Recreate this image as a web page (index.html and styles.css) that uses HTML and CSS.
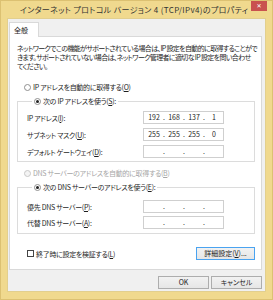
FILE: index.html
```html
<!DOCTYPE html>
<html lang="ja">
<head>
<meta charset="utf-8">
<title>インターネット プロトコル バージョン 4 (TCP/IPv4)のプロパティ</title>
<link rel="stylesheet" href="styles.css">
</head>
<body>
<div class="window">
  <div class="titlebar">
    <span class="title">インターネット プロトコル バージョン 4 (TCP/IPv4)のプロパティ</span>
    <span class="close">✕</span>
  </div>
  <div class="client">
    <div class="tabs"><div class="tab">全般</div></div>
    <div class="panel">
      <p class="desc">ネットワークでこの機能がサポートされている場合は、IP 設定を自動的に取得することがで<br>きます。サポートされていない場合は、ネットワーク管理者に適切な IP 設定を問い合わせ<br>てください。</p>
      <div class="opt first"><span class="radio"></span>IP アドレスを自動的に取得する(<u>O</u>)</div>
      <fieldset class="group group-ip">
        <legend class="opt"><span class="radio checked"></span>次の IP アドレスを使う(<u>S</u>):</legend>
        <div class="row"><span class="label">IP アドレス(<u>I</u>):</span><div class="ip"><span class="oct">192</span><span class="dot">.</span><span class="oct">168</span><span class="dot">.</span><span class="oct">137</span><span class="dot">.</span><span class="oct">1</span></div></div>
        <div class="row"><span class="label">サブネット マスク(<u>U</u>):</span><div class="ip"><span class="oct">255</span><span class="dot">.</span><span class="oct">255</span><span class="dot">.</span><span class="oct">255</span><span class="dot">.</span><span class="oct">0</span></div></div>
        <div class="row"><span class="label">デフォルト ゲートウェイ(<u>D</u>):</span><div class="ip"><span class="oct"></span><span class="dot">.</span><span class="oct"></span><span class="dot">.</span><span class="oct"></span><span class="dot">.</span><span class="oct"></span></div></div>
      </fieldset>
      <div class="opt disabled"><span class="radio"></span>DNS サーバーのアドレスを自動的に取得する(<u>B</u>)</div>
      <fieldset class="group group-dns">
        <legend class="opt"><span class="radio checked"></span>次の DNS サーバーのアドレスを使う(<u>E</u>):</legend>
        <div class="row"><span class="label">優先 DNS サーバー(<u>P</u>):</span><div class="ip"><span class="oct"></span><span class="dot">.</span><span class="oct"></span><span class="dot">.</span><span class="oct"></span><span class="dot">.</span><span class="oct"></span></div></div>
        <div class="row"><span class="label">代替 DNS サーバー(<u>A</u>):</span><div class="ip"><span class="oct"></span><span class="dot">.</span><span class="oct"></span><span class="dot">.</span><span class="oct"></span><span class="dot">.</span><span class="oct"></span></div></div>
      </fieldset>
      <div class="bottom">
        <div class="check"><span class="box"></span>終了時に設定を検証する(<u>L</u>)</div>
        <button class="btn btn-focus">詳細設定(<u>V</u>)...</button>
      </div>
    </div>
    <div class="buttons">
      <button class="btn btn-ok">OK</button>
      <button class="btn btn-cancel">キャンセル</button>
    </div>
  </div>
</div>
</body>
</html>
```
FILE: styles.css
```css
* { box-sizing: border-box; }
html, body { margin: 0; padding: 0; }
body {
  width: 273px;
  height: 300px;
  overflow: hidden;
  font-family: "Noto Sans CJK JP", "Noto Sans", sans-serif;
  font-size: 7px;
  font-feature-settings: "palt";
  letter-spacing: -0.3px;
  color: #1e1e1e;
}
.window {
  width: 273px;
  height: 300px;
  background: #f0d98e;
  border: 1px solid #dcc172;
  padding: 0 6px 7px 6px;
  display: flex;
  flex-direction: column;
}
.titlebar {
  height: 17px;
  display: grid;
  grid-template-columns: 1fr auto 1fr;
  align-items: start;
  margin: 0 -6px 0 -6px;
  padding-right: 5px;
}
.title {
  grid-column: 2;
  font-size: 8px;
  letter-spacing: 0.35px;
  line-height: 18px;
  color: #333;
  white-space: nowrap;
}
.close {
  grid-column: 3;
  justify-self: end;
  width: 16px;
  height: 10px;
  background: #c9524f;
  color: #fff;
  font-size: 6px;
  line-height: 10px;
  letter-spacing: 0;
  text-align: center;
  font-family: "DejaVu Sans", sans-serif;
}
.client {
  flex: 1;
  background: #f0f0f0;
  border: 1px solid #e2cf8e;
  padding: 3px 3px 0 1px;
  display: flex;
  flex-direction: column;
}
.tabs { display: flex; }
.tab {
  width: 30px;
  height: 15px;
  background: #fff;
  border: 1px solid #d9d9d9;
  border-bottom: none;
  padding-left: 4px;
  line-height: 14px;
  letter-spacing: 0;
  position: relative;
  z-index: 1;
  margin-bottom: -1px;
}
.panel {
  background: #fff;
  border: 1px solid #d9d9d9;
  padding: 7px 6px 9px 7px;
  display: flex;
  flex-direction: column;
}
.desc {
  margin: 0;
  line-height: 9px;
  white-space: nowrap;
  letter-spacing: -0.65px;
}
.opt {
  display: flex;
  align-items: center;
  line-height: 9px;
  white-space: nowrap;
}
.opt.first { margin: 12px 0 0 7px; }
.opt.disabled { margin: 7px 0 0 7px; color: #a6a6a6; }
.radio {
  width: 7px;
  height: 7px;
  border: 1px solid #8f8f8f;
  border-radius: 50%;
  background: #fff;
  margin-right: 2px;
  display: inline-flex;
  align-items: center;
  justify-content: center;
}
.radio.checked::after {
  content: "";
  width: 3px;
  height: 3px;
  border-radius: 50%;
  background: #222;
}
.disabled .radio { border-color: #c8c8c8; background: #f4f4f4; }
.group {
  margin: 5px 0 0 0;
  border: 1px solid #dcdcdc;
  padding: 5px 30px 3px 9px;
  min-width: 0;
  display: flex;
  flex-direction: column;
  gap: 4px;
}
.group-dns { margin-top: 5px; padding-top: 8px; gap: 3px; padding-bottom: 4px; }
.group legend {
  padding: 0 2px;
  margin-left: 5px;
  background: #fff;
}
.row {
  display: flex;
  align-items: center;
  height: 13px;
}
.label { width: 116px; white-space: nowrap; }
.ip {
  width: 81px;
  height: 13px;
  border: 1px solid #cfcfcf;
  background: #fff;
  display: flex;
  align-items: center;
  padding-left: 3px;
  line-height: 11px;
  letter-spacing: 0;
}
.oct { width: 14px; text-align: center; }
.dot { width: 6px; text-align: center; }
.bottom {
  margin-top: 13px;
  display: flex;
  justify-content: space-between;
  align-items: center;
}
.check {
  display: flex;
  align-items: center;
  margin-left: 10px;
  white-space: nowrap;
}
.box {
  width: 7px;
  height: 7px;
  border: 1px solid #444;
  background: #fff;
  margin-right: 2px;
}
.btn {
  font: inherit;
  color: #1e1e1e;
  height: 13px;
  padding: 0;
  border: 1px solid #adadad;
  background: linear-gradient(#f2f2f2, #e6e6e6);
  line-height: 11px;
  white-space: nowrap;
}
.btn-focus { width: 59px; border-color: #4aa3f0; }
.buttons {
  margin-top: 6px;
  display: flex;
  justify-content: flex-end;
  gap: 2px;
  padding-right: 0;
}
.btn-ok, .btn-cancel { width: 51px; }
```
